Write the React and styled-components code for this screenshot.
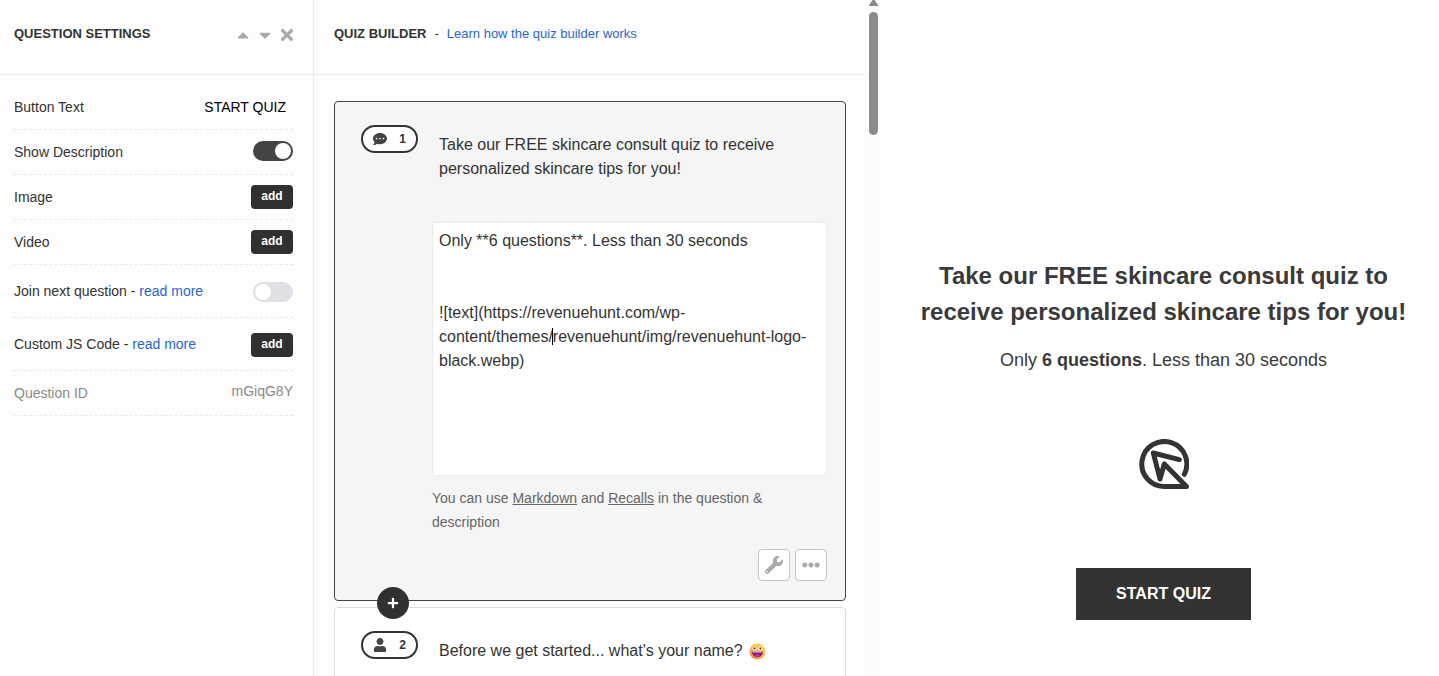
import React, { useState } from "react";
import styled, { createGlobalStyle } from "styled-components";
import {
  FaCaretUp,
  FaCaretDown,
  FaTimes,
  FaCommentDots,
  FaUser,
  FaPlus,
  FaWrench,
  FaEllipsisH,
} from "react-icons/fa";

const GlobalStyle = createGlobalStyle`
  *, *::before, *::after { box-sizing: border-box; }
  body {
    margin: 0;
    background: #fff;
    color: #333;
    font-family: "Liberation Sans", Arial, sans-serif;
    font-size: 14px;
  }
  button, input, textarea { font-family: inherit; margin: 0; }
  button { cursor: pointer; }
  h1, h2, p, ul { margin: 0; padding: 0; }
`;

const Shell = styled.div`
  display: grid;
  grid-template-columns: 314px minmax(0, 567fr) minmax(0, 558fr);
  height: 100vh;
  overflow: hidden;
`;

const Sidebar = styled.aside`
  background: #fdfdfd;
  border-right: 1px solid #ebebeb;
  overflow: hidden;
`;

const PanelHeader = styled.header`
  display: flex;
  align-items: flex-start;
  height: 75px;
  padding: 25px 18px 0 ${(p) => p.$indent}px;
  border-bottom: 1px solid #ebebeb;
  font-size: 13px;
  line-height: 18px;
`;

const PanelTitle = styled.h2`
  font-size: 13px;
  line-height: 18px;
  font-weight: bold;
  color: #333;
`;

const HeaderActions = styled.div`
  display: flex;
  gap: 5px;
  margin-left: auto;
  padding-top: 1px;
`;

const HeaderIcon = styled.button`
  display: flex;
  align-items: center;
  justify-content: center;
  width: 17px;
  height: 18px;
  padding: 0;
  border: 0;
  background: none;
  color: #aaa;

  svg { flex: none; }
`;

const TextLink = styled.a`
  color: #2a66d1;
  text-decoration: none;
`;

const Separator = styled.span`
  margin: 0 8px;
`;

const Settings = styled.ul`
  list-style: none;
  padding: 10px 20px 0 14px;
`;

const SettingRow = styled.li`
  display: flex;
  align-items: center;
  justify-content: space-between;
  height: ${(p) => (p.$tall ? 53 : 45)}px;
  border-bottom: 1px dashed #e8e8e8;
  color: ${(p) => (p.$muted ? "#8a8a8a" : "#333")};
`;

const SettingControl = styled.div`
  display: flex;
  padding-top: ${(p) => (p.$tall ? 2 : 0)}px;
  padding-bottom: ${(p) => (p.$tall ? 0 : 2)}px;
`;

const ButtonTextInput = styled.input`
  width: 140px;
  padding: 0 7px;
  border: 0;
  background: transparent;
  color: #000;
  font-size: 14px;
  line-height: 20px;
  text-align: right;
  outline: none;
`;

const Switch = styled.input`
  appearance: none;
  display: flex;
  align-items: center;
  width: 40px;
  height: 20px;
  margin: 0;
  padding: 0 2px;
  border-radius: 10px;
  background: #dfdfe6;
  cursor: pointer;

  &::before {
    content: "";
    width: 16px;
    height: 16px;
    border-radius: 50%;
    background: #fff;
  }

  &:checked {
    justify-content: flex-end;
    background: #444;
  }
`;

const AddButton = styled.button`
  width: 42px;
  height: 24px;
  padding: 0 0 2px;
  border: 0;
  border-radius: 4px;
  background: #303030;
  color: #fff;
  font-size: 12px;
  font-weight: bold;
`;

const SettingValue = styled.span`
  padding-bottom: 4px;
`;

const Builder = styled.main`
  display: flex;
  min-width: 0;
  overflow: hidden;
  background: #fdfdfd;
`;

const BuilderContent = styled.div`
  flex: 1;
  min-width: 0;
`;

const CardList = styled.div`
  display: flex;
  flex-direction: column;
  gap: 6px;
  padding: 26px 20px 20px;
`;

const Card = styled.section`
  position: relative;
  display: grid;
  grid-template-columns: 57px minmax(0, 1fr);
  column-gap: 14px;
  align-items: start;
  padding: 23px 18px 19px 26px;
  border: 1px solid ${(p) => (p.$active ? "#444" : "#dcdcdc")};
  border-radius: 4px;
  background: ${(p) => (p.$active ? "#f5f5f5" : "#fff")};
`;

const Badge = styled.div`
  display: flex;
  align-items: center;
  justify-content: space-between;
  height: 28px;
  padding: 0 10px;
  border: 2px solid #333;
  border-radius: 14px;
  background: #fff;
  color: #333;
  font-size: 12px;
  font-weight: bold;

  svg { color: #444; }
`;

const CardBody = styled.div`
  display: flex;
  flex-direction: column;
  min-width: 0;
`;

const QuestionField = styled.textarea`
  display: block;
  width: 100%;
  height: 62px;
  padding: 7px 6px 5px;
  border: 1px solid transparent;
  background: transparent;
  color: #333;
  font-size: 16px;
  line-height: 24px;
  resize: none;
  outline: none;
  overflow: hidden;
`;

const QuestionTitle = styled.p`
  display: flex;
  align-items: center;
  gap: 6px;
  padding: 8px 7px 6px;
  font-size: 16px;
  line-height: 24px;
`;

const DescriptionWrap = styled.div`
  position: relative;
  margin-top: 35px;
`;

const DescriptionField = styled(QuestionField)`
  height: 254px;
  padding-top: 6px;
  border-color: #ebebeb;
  border-radius: 4px;
  background: #fff;
`;

const Caret = styled.span`
  position: absolute;
  left: 120px;
  top: 106px;
  width: 1px;
  height: 17px;
  background: #000;
`;

const Hint = styled.p`
  margin-top: 10px;
  color: #666;
  font-size: 14px;
  line-height: 24px;

  a { color: inherit; }
`;

const CardActions = styled.div`
  display: flex;
  justify-content: flex-end;
  gap: 5px;
  margin-top: 15px;
`;

const ToolButton = styled.button`
  display: flex;
  align-items: center;
  justify-content: center;
  width: 32px;
  height: 32px;
  padding: 0;
  border: 1px solid #c3c3ca;
  border-radius: 4px;
  background: #fff;
  color: #aaa;
`;

const InsertButton = styled.button`
  position: absolute;
  z-index: 1;
  left: 42px;
  bottom: -19px;
  display: flex;
  align-items: center;
  justify-content: center;
  width: 32px;
  height: 32px;
  padding: 0;
  border: 0;
  border-radius: 50%;
  background: #303030;
  color: #fff;
`;

const ScrollTrack = styled.div`
  display: flex;
  flex-direction: column;
  align-items: center;
  gap: 6px;
  flex: 0 0 15px;
  background: #fcfcfc;
`;

const ScrollArrow = styled.svg`
  display: block;
  width: 9px;
  height: 6px;
`;

const ScrollThumb = styled.div`
  width: 9px;
  height: 123px;
  border-radius: 5px;
  background: #8b8b8b;
`;

const Preview = styled.section`
  display: flex;
  flex-direction: column;
  align-items: center;
  padding: 258px 0 0 7px;
  background: #fff;
  color: #3a3a3a;
  text-align: center;
`;

const PreviewTitle = styled.h1`
  max-width: 500px;
  font-size: 24px;
  line-height: 36px;
`;

const PreviewText = styled.p`
  margin-top: 17px;
  font-size: 18px;
  line-height: 27px;
`;

const Logo = styled.svg`
  width: 50px;
  height: 50px;
  margin-top: 65px;
`;

const StartButton = styled.button`
  height: 52px;
  margin-top: 79px;
  padding: 0 40px;
  border: 0;
  background: #333;
  color: #fff;
  font-size: 16px;
  font-weight: bold;
`;

function GrinEmoji() {
  return (
    <svg width="17" height="17" viewBox="0 0 17 17" role="img" aria-label="Grinning face">
      <defs>
        <linearGradient id="face" x1="1" y1="0" x2="0" y2="1">
          <stop offset="0" stopColor="#ffd84f" />
          <stop offset="0.6" stopColor="#f9b23c" />
          <stop offset="1" stopColor="#e0637d" />
        </linearGradient>
      </defs>
      <circle cx="8.5" cy="8.5" r="8" fill="url(#face)" />
      <circle cx="5.4" cy="5.2" r="2" fill="#fff" />
      <circle cx="11.4" cy="5.2" r="2" fill="#fff" />
      <circle cx="5.4" cy="5.3" r="1.1" fill="#43304a" />
      <circle cx="11.4" cy="5.3" r="1.1" fill="#43304a" />
      <path d="M3 8.4h11c0 3.200-2.200 5.600-5.500 5.600S3 11.600 3 8.400z" fill="#8b1c88" />
      <path d="M3.600 8.400h9.800v1H3.600z" fill="#e9dcf0" />
      <ellipse cx="8.500" cy="12.600" rx="2.400" ry="1" fill="#c53a98" />
    </svg>
  );
}

const initialDescription =
  "Only **6 questions**. Less than 30 seconds\n\n\n![text](https://revenuehunt.com/wp-content/themes/revenuehunt/img/revenuehunt-logo-black.webp)";

export default function App() {
  const [buttonText, setButtonText] = useState("START QUIZ");
  const [title, setTitle] = useState(
    "Take our FREE skincare consult quiz to receive personalized skincare tips for you!"
  );
  const [description, setDescription] = useState(initialDescription);

  return (
    <>
      <GlobalStyle />
      <Shell>
        <Sidebar>
          <PanelHeader $indent={14}>
            <PanelTitle>QUESTION SETTINGS</PanelTitle>
            <HeaderActions>
              <HeaderIcon aria-label="Previous question"><FaCaretUp size={18} /></HeaderIcon>
              <HeaderIcon aria-label="Next question"><FaCaretDown size={18} /></HeaderIcon>
              <HeaderIcon aria-label="Close settings"><FaTimes size={18} /></HeaderIcon>
            </HeaderActions>
          </PanelHeader>
          <Settings>
            <SettingRow>
              <label htmlFor="button-text">Button Text</label>
              <ButtonTextInput
                id="button-text"
                value={buttonText}
                onChange={(e) => setButtonText(e.target.value)}
              />
            </SettingRow>
            <SettingRow>
              <label htmlFor="show-description">Show Description</label>
              <SettingControl>
                <Switch id="show-description" type="checkbox" defaultChecked />
              </SettingControl>
            </SettingRow>
            <SettingRow>
              <span>Image</span>
              <AddButton aria-label="add image">add</AddButton>
            </SettingRow>
            <SettingRow>
              <span>Video</span>
              <AddButton aria-label="add video">add</AddButton>
            </SettingRow>
            <SettingRow $tall>
              <span>
                <label htmlFor="join-next">Join next question</label> -{" "}
                <TextLink href="#join">read more</TextLink>
              </span>
              <SettingControl $tall>
                <Switch id="join-next" type="checkbox" />
              </SettingControl>
            </SettingRow>
            <SettingRow $tall>
              <span>
                Custom JS Code - <TextLink href="#custom-js">read more</TextLink>
              </span>
              <SettingControl $tall>
                <AddButton aria-label="add custom code">add</AddButton>
              </SettingControl>
            </SettingRow>
            <SettingRow $muted>
              <span>Question ID</span>
              <SettingValue>mGiqG8Y</SettingValue>
            </SettingRow>
          </Settings>
        </Sidebar>

        <Builder>
          <BuilderContent>
            <PanelHeader $indent={20}>
              <PanelTitle>QUIZ BUILDER</PanelTitle>
              <Separator>-</Separator>
              <TextLink href="#learn">Learn how the quiz builder works</TextLink>
            </PanelHeader>
            <CardList>
              <Card $active>
                <Badge><FaCommentDots size={14} />1</Badge>
                <CardBody>
                  <QuestionField
                    aria-label="Question"
                    value={title}
                    onChange={(e) => setTitle(e.target.value)}
                  />
                  <DescriptionWrap>
                    <DescriptionField
                      aria-label="Description"
                      spellCheck={false}
                      value={description}
                      onChange={(e) => setDescription(e.target.value)}
                    />
                    <Caret />
                  </DescriptionWrap>
                  <Hint>
                    You can use <a href="#markdown">Markdown</a> and{" "}
                    <a href="#recalls">Recalls</a> in the question &amp; description
                  </Hint>
                  <CardActions>
                    <ToolButton aria-label="Question settings"><FaWrench size={18} /></ToolButton>
                    <ToolButton aria-label="More options"><FaEllipsisH size={18} /></ToolButton>
                  </CardActions>
                </CardBody>
                <InsertButton aria-label="Insert question"><FaPlus size={12} /></InsertButton>
              </Card>
              <Card>
                <Badge><FaUser size={14} />2</Badge>
                <CardBody>
                  <QuestionTitle>
                    Before we get started... what's your name? <GrinEmoji />
                  </QuestionTitle>
                </CardBody>
              </Card>
            </CardList>
          </BuilderContent>
          <ScrollTrack>
            <ScrollArrow viewBox="0 0 9 6" aria-hidden="true">
              <path d="M3.500 0h2L9 5v1H0V5z" fill="#8b8b8b" />
            </ScrollArrow>
            <ScrollThumb />
          </ScrollTrack>
        </Builder>

        <Preview>
          <PreviewTitle>{title}</PreviewTitle>
          <PreviewText>
            Only <strong>6 questions</strong>. Less than 30 seconds
          </PreviewText>
          <Logo viewBox="0 0 50 50" role="img" aria-label="RevenueHunt logo">
            <path
              d="M45.300 35.300A22.500 22.500 0 1 0 25 47.500H47.500L25.300 25L21 40L14.300 14L40.300 20.700"
              fill="none"
              stroke="#333"
              strokeWidth="5"
              strokeLinecap="round"
              strokeLinejoin="round"
            />
          </Logo>
          <StartButton>{buttonText}</StartButton>
        </Preview>
      </Shell>
    </>
  );
}
